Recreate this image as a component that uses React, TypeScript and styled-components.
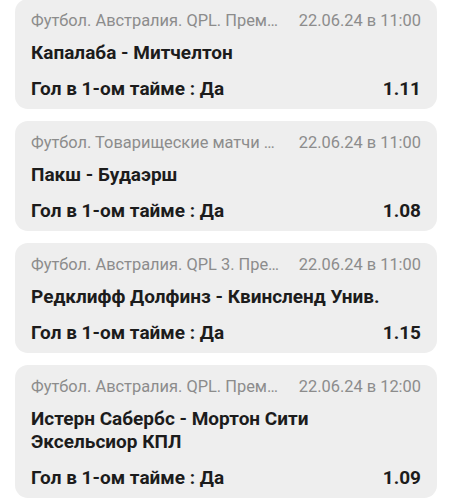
import React from 'react';
import styled, { createGlobalStyle } from 'styled-components';

const GlobalStyle = createGlobalStyle`
  html, body {
    margin: 0;
    padding: 0;
    background: #ffffff;
  }
  body {
    font-family: Roboto, "Noto Sans", sans-serif;
    -webkit-font-smoothing: antialiased;
  }
`;

const List = styled.div`
  display: flex;
  flex-direction: column;
  gap: 12px;
  padding: 0 15px;
  margin-top: -1px;
`;

const Card = styled.div`
  background: #eeeeee;
  border-radius: 13px;
  padding: 12px 16px 9px;
  display: flex;
  flex-direction: column;
`;

const Header = styled.div`
  display: flex;
  align-items: center;
  gap: 17px;
  font-size: 16.4px;
  line-height: 20px;
  color: #8c8c8c;
`;

const League = styled.span`
  flex: 1;
  min-width: 0;
  white-space: nowrap;
  overflow: hidden;
  text-overflow: ellipsis;
`;

const Date = styled.span`
  flex-shrink: 0;
`;

const Teams = styled.div`
  margin-top: 10px;
  padding-right: 40px;
  font-size: 19px;
  line-height: 23px;
  font-weight: 700;
  color: #1c1c1c;
`;

const BetRow = styled.div`
  margin-top: 13px;
  display: flex;
  justify-content: space-between;
  font-size: 19px;
  line-height: 23px;
  font-weight: 700;
  color: #1c1c1c;
`;

type Bet = {
  league: string;
  date: string;
  teams: string;
  outcome: string;
  odds: string;
};

const bets: Bet[] = [
  {
    league: 'Футбол. Австралия. QPL. Премьер-лига',
    date: '22.06.24 в 11:00',
    teams: 'Капалаба - Митчелтон',
    outcome: 'Гол в 1-ом тайме : Да',
    odds: '1.11',
  },
  {
    league: 'Футбол. Товарищеские матчи клубов',
    date: '22.06.24 в 11:00',
    teams: 'Пакш - Будаэрш',
    outcome: 'Гол в 1-ом тайме : Да',
    odds: '1.08',
  },
  {
    league: 'Футбол. Австралия. QPL 3. Премьер-лига',
    date: '22.06.24 в 11:00',
    teams: 'Редклифф Долфинз - Квинсленд Унив.',
    outcome: 'Гол в 1-ом тайме : Да',
    odds: '1.15',
  },
  {
    league: 'Футбол. Австралия. QPL. Премьер-лига',
    date: '22.06.24 в 12:00',
    teams: 'Истерн Сабербс - Мортон Сити Эксельсиор КПЛ',
    outcome: 'Гол в 1-ом тайме : Да',
    odds: '1.09',
  },
];

export default function App() {
  return (
    <>
      <GlobalStyle />
      <List>
        {bets.map((b, i) => (
          <Card key={i}>
            <Header>
              <League>{b.league}</League>
              <Date>{b.date}</Date>
            </Header>
            <Teams>{b.teams}</Teams>
            <BetRow>
              <span>{b.outcome}</span>
              <span>{b.odds}</span>
            </BetRow>
          </Card>
        ))}
      </List>
    </>
  );
}
